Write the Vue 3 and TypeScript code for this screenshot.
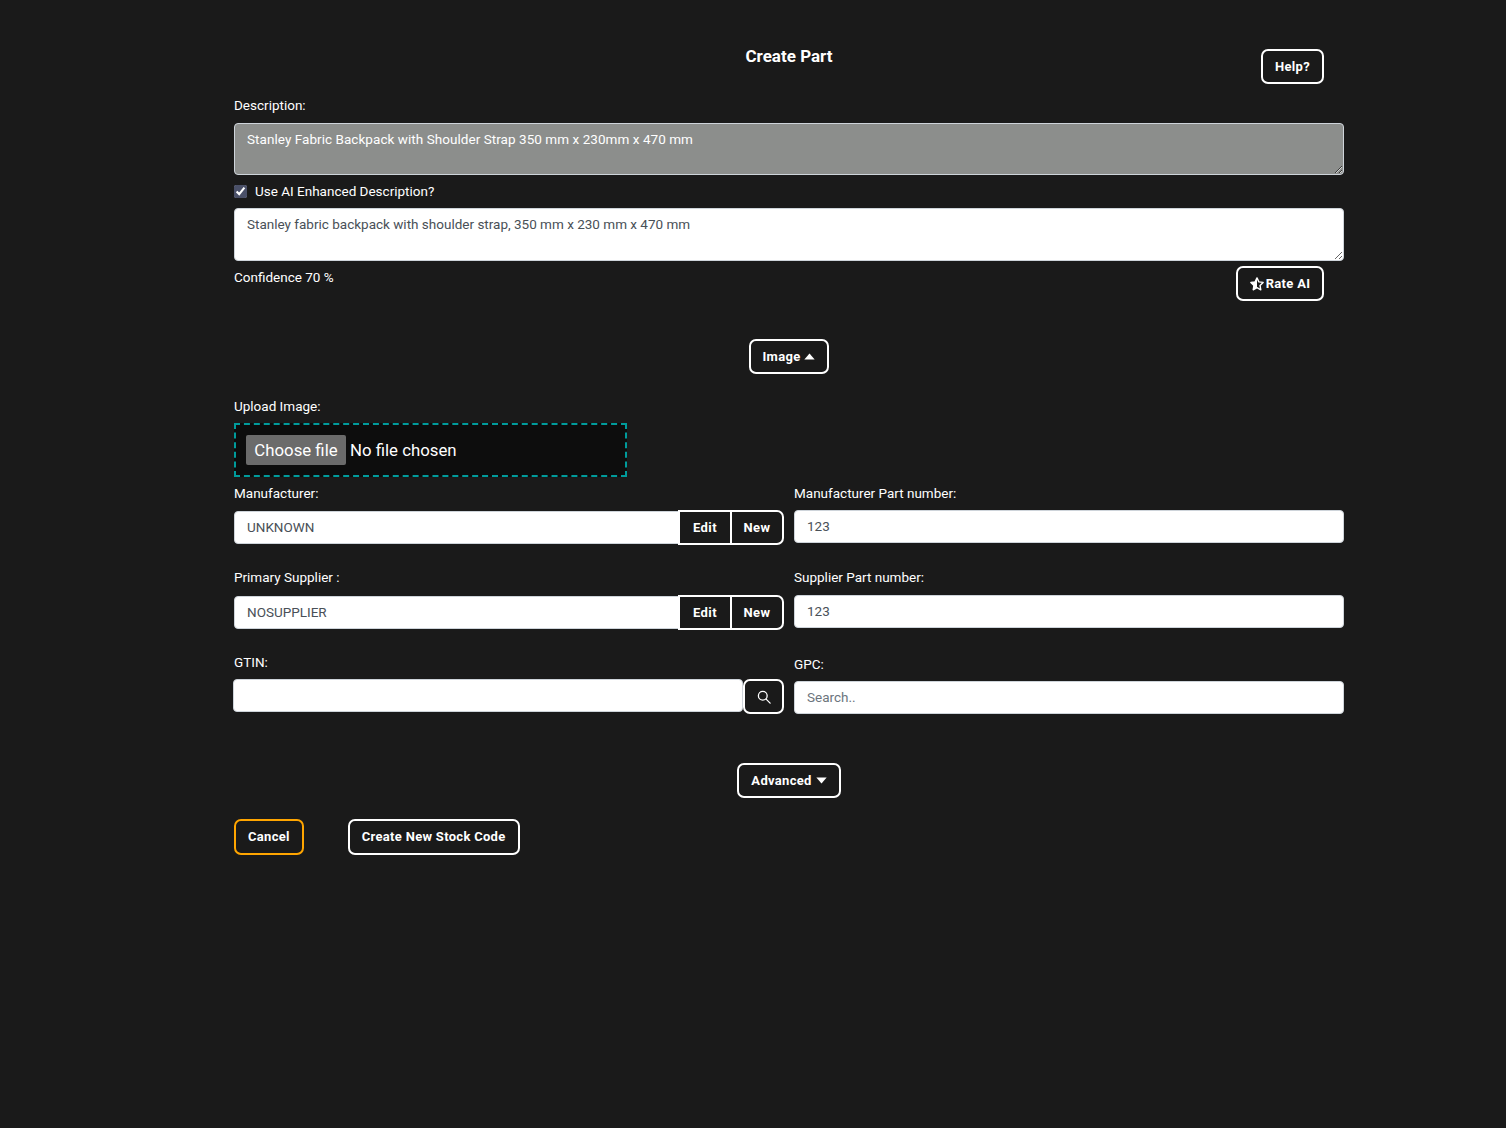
<script setup lang="ts">
import { ref } from 'vue'

const description = ref('Stanley Fabric Backpack with Shoulder Strap 350 mm x 230mm x 470 mm')
const aiDescription = ref('Stanley fabric backpack with shoulder strap, 350 mm x 230 mm x 470 mm')
const useAi = ref(true)
const confidence = ref(70)
const manufacturer = ref('UNKNOWN')
const supplier = ref('NOSUPPLIER')
const manufacturerPart = ref('123')
const supplierPart = ref('123')
const gtin = ref('')
const gpc = ref('')
const fileName = ref('No file chosen')

function onFile(e: Event) {
  const files = (e.target as HTMLInputElement).files
  fileName.value = files && files.length ? files[0].name : 'No file chosen'
}
</script>

<template>
  <div class="page">
    <div class="form">
      <header class="top">
        <h1 class="title">Create Part</h1>
        <button class="btn help">Help?</button>
      </header>

      <label class="label desc-label">Description:</label>
      <textarea v-model="description" class="field area area--grey" readonly></textarea>

      <label class="check-row">
        <input v-model="useAi" type="checkbox" class="check" />
        <span>Use AI Enhanced Description?</span>
      </label>
      <textarea v-model="aiDescription" class="field area area--ai" readonly></textarea>

      <div class="confidence-row">
        <span class="label">Confidence {{ confidence }} %</span>
        <button class="btn rate">
          <svg class="star" viewBox="0 0 24 24" width="14" height="14">
            <path
              d="M12 1.5l3.2 6.8 7.3 1-5.3 5.2 1.3 7.4L12 18.4l-6.5 3.5 1.3-7.4L1.5 9.3l7.3-1z"
              fill="none"
              stroke="#fff"
              stroke-width="2.4"
              stroke-linejoin="round"
            />
            <path d="M12 1.5v16.9l-6.5 3.5 1.3-7.4L1.5 9.3l7.3-1z" fill="#fff" />
          </svg>
          Rate AI
        </button>
      </div>

      <div class="toggle-row">
        <button class="btn image">
          Image
          <svg class="caret" viewBox="0 0 10 6" width="11" height="7"><path d="M5 0.3l4.7 5.4H0.3z" fill="#fff" /></svg>
        </button>
      </div>

      <label class="label upload-label">Upload Image:</label>
      <div class="drop">
        <label class="file-btn">
          Choose file
          <input type="file" class="file" @change="onFile" />
        </label>
        <span class="file-name">{{ fileName }}</span>
      </div>

      <div class="cols">
        <div class="cell">
          <label class="label">Manufacturer:</label>
          <div class="combo">
            <input v-model="manufacturer" class="field combo-input" />
            <div class="btn-group">
              <button class="group-btn group-btn--edit">Edit</button>
              <button class="group-btn group-btn--end">New</button>
            </div>
          </div>
        </div>
        <div class="cell">
          <label class="label">Manufacturer Part number:</label>
          <input v-model="manufacturerPart" class="field plain" />
        </div>

        <div class="cell cell--second">
          <label class="label">Primary Supplier :</label>
          <div class="combo">
            <input v-model="supplier" class="field combo-input" />
            <div class="btn-group">
              <button class="group-btn group-btn--edit">Edit</button>
              <button class="group-btn group-btn--end">New</button>
            </div>
          </div>
        </div>
        <div class="cell cell--second">
          <label class="label">Supplier Part number:</label>
          <input v-model="supplierPart" class="field plain" />
        </div>

        <div class="cell">
          <label class="label">GTIN:</label>
          <div class="gtin">
            <input v-model="gtin" class="field gtin-input" />
            <button class="search-btn" title="Search">
              <svg viewBox="0 0 16 16" width="14" height="14" fill="none" stroke="#fff" stroke-width="1.5">
                <circle cx="6.6" cy="6.6" r="5" />
                <path d="M10.4 10.4l4.6 4.6" stroke-linecap="round" />
              </svg>
            </button>
          </div>
        </div>
        <div class="cell cell--gpc">
          <label class="label">GPC:</label>
          <input v-model="gpc" class="field plain" placeholder="Search.." />
        </div>
      </div>

      <div class="toggle-row toggle-row--advanced">
        <button class="btn">
          Advanced
          <svg class="caret" viewBox="0 0 10 6" width="11" height="7"><path d="M5 5.7L0.3 0.3h9.4z" fill="#fff" /></svg>
        </button>
      </div>

      <div class="actions">
        <button class="btn btn--tall btn--cancel">Cancel</button>
        <button class="btn btn--tall">Create New Stock Code</button>
      </div>
    </div>
  </div>
</template>

<style>
html,
body {
  background: #1a1a1a;
}
</style>

<style scoped>
.page {
  min-height: 1128px;
  background: #1a1a1a;
  color: #fff;
  font-family: Roboto, "Liberation Sans", sans-serif;
  font-size: 14px;
  box-sizing: border-box;
  padding: 49px 162px 0 234px;
}

.form {
  width: 1110px;
}

.top {
  position: relative;
  display: flex;
  justify-content: flex-end;
  padding-right: 20px;
}

.title {
  position: absolute;
  left: 0;
  right: 0;
  top: -4px;
  margin: 0;
  text-align: center;
  font-size: 17px;
  line-height: 22px;
  font-weight: 700;
}

.label {
  display: block;
  font-size: 13.5px;
  line-height: 18px;
}

.desc-label {
  margin-top: 12px;
  margin-bottom: 9px;
}

.btn {
  display: inline-flex;
  align-items: center;
  justify-content: center;
  gap: 4px;
  height: 35px;
  padding: 0 12px;
  box-sizing: border-box;
  background: #1a1a1a;
  color: #fff;
  border: 2px solid #fff;
  border-radius: 7px;
  font-family: inherit;
  font-size: 13px;
  font-weight: 700;
  letter-spacing: 0.3px;
  cursor: pointer;
}

.help {
  width: 63px;
  padding: 0;
}

.rate {
  width: 88px;
  padding: 0;
  gap: 2px;
}

.image {
  width: 80px;
  padding: 0;
}

.btn--tall {
  height: 36px;
  padding-bottom: 2px;
}

.btn--cancel {
  border-color: #ffa500;
}

.field {
  box-sizing: border-box;
  display: block;
  width: 100%;
  background: #fff;
  color: #495057;
  border: 1px solid #ced4da;
  border-radius: 4px;
  padding: 5px 12px 7px;
  font-family: inherit;
  font-size: 13.5px;
  outline: none;
}

.field::placeholder {
  color: #6c757d;
}

.area {
  height: 52px;
  line-height: 20px;
  letter-spacing: 0.05px;
  resize: vertical;
}

.area--grey {
  background: #8c8e8c;
  color: #fff;
}

.area--ai {
  height: 53px;
  letter-spacing: 0;
}

.check-row {
  display: flex;
  align-items: center;
  gap: 8px;
  height: 33px;
  font-size: 13.5px;
}

.check-row span {
  margin-bottom: 2px;
}

.check {
  width: 13px;
  height: 13px;
  margin: 0;
  accent-color: #4a5068;
}

.confidence-row {
  display: flex;
  justify-content: space-between;
  align-items: flex-start;
  padding: 5px 20px 0 0;
  margin-bottom: 38px;
}

.confidence-row .label {
  margin-top: 2px;
}

.toggle-row {
  display: flex;
  justify-content: center;
}

.upload-label {
  margin-top: 23px;
  margin-bottom: 8px;
}

.drop {
  box-sizing: border-box;
  display: flex;
  align-items: center;
  gap: 4px;
  width: 393px;
  height: 54px;
  padding: 0 10px;
  background: #0d0d0d;
  border: 2px dashed #009b9b;
  font-size: 16.8px;
}

.file-btn {
  display: flex;
  align-items: center;
  justify-content: center;
  box-sizing: border-box;
  width: 100px;
  height: 30px;
  background: #6b6b6b;
  border-radius: 2px;
  cursor: pointer;
}

.file {
  display: none;
}

.file-name {
  white-space: nowrap;
}

.cols {
  display: grid;
  grid-template-columns: 550px 550px;
  column-gap: 10px;
  margin-top: 7px;
}

.cell {
  min-height: 85px;
}

.cell > .label {
  margin-bottom: 8px;
}

.cell--second {
  margin-top: -1px;
}

.cell--second > .label {
  margin-bottom: 9px;
}

.combo {
  display: flex;
  align-items: center;
}

.combo-input {
  flex: 1;
  min-width: 0;
  height: 33px;
  margin-right: -1px;
  border-radius: 4px 0 0 4px;
}

.plain {
  height: 33px;
}

.btn-group {
  display: flex;
  height: 35px;
  position: relative;
}

.group-btn {
  box-sizing: border-box;
  width: 54px;
  height: 35px;
  padding: 0;
  background: #1a1a1a;
  color: #fff;
  border: 2px solid #fff;
  border-right: none;
  font-family: inherit;
  font-size: 13px;
  font-weight: 700;
  letter-spacing: 0.4px;
  cursor: pointer;
}

.group-btn--edit {
  width: 52px;
}

.group-btn--end {
  border-right: 2px solid #fff;
  border-radius: 0 7px 7px 0;
}

.gtin {
  display: flex;
  align-items: flex-start;
}

.gtin-input {
  flex: 1;
  height: 33px;
  margin-left: -1px;
}

.search-btn {
  box-sizing: border-box;
  display: flex;
  align-items: center;
  justify-content: center;
  width: 41px;
  height: 35px;
  padding: 0;
  background: #1a1a1a;
  border: 2px solid #fff;
  border-radius: 7px;
  cursor: pointer;
}

.cell--gpc {
  padding-top: 2px;
}

.toggle-row--advanced {
  margin-top: 23px;
}

.actions {
  display: flex;
  gap: 44px;
  margin-top: 21px;
}
</style>
